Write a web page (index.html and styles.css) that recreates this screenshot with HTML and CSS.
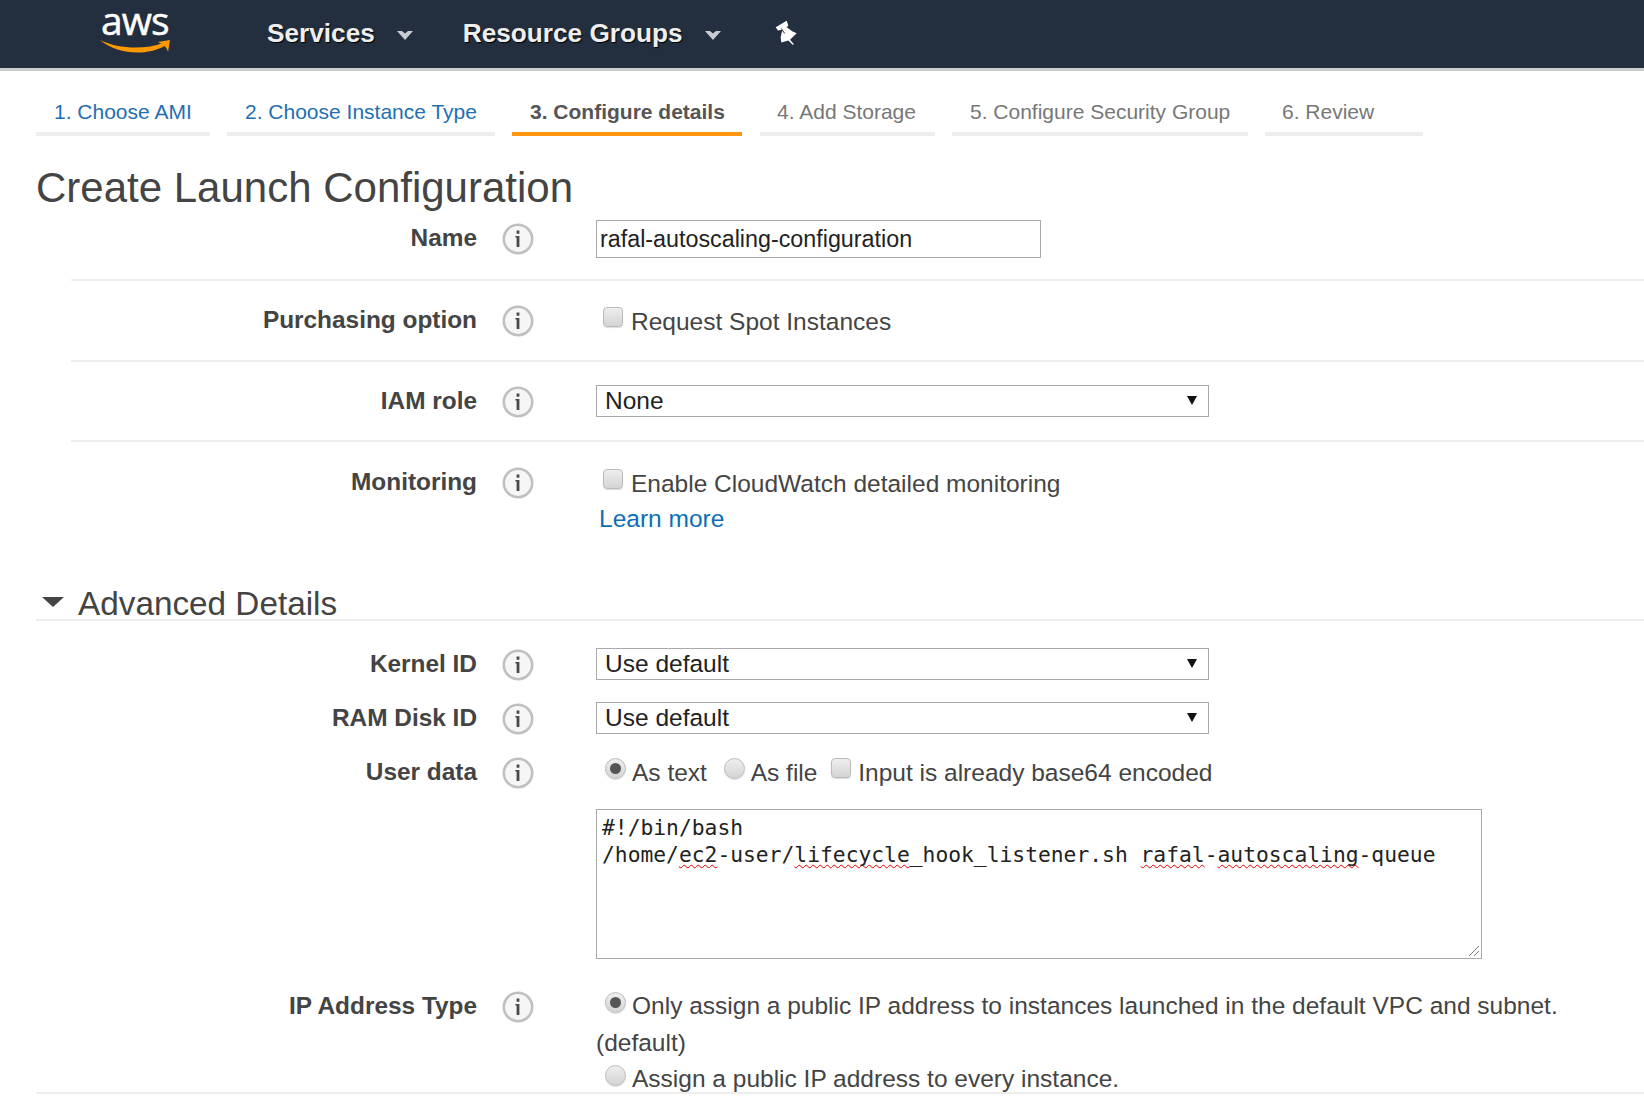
FILE: index.html
```html
<!DOCTYPE html>
<html lang="en">
<head>
    <meta charset="UTF-8">
    <title>Create Launch Configuration</title>
    <link rel="stylesheet" href="styles.css">
</head>
<body>
    <svg class="defs" width="0" height="0">
        <symbol id="info" viewBox="0 0 32 32">
            <circle cx="16" cy="16" r="14.2" fill="#f6f6f6" stroke="#c0c0c0" stroke-width="2.6"/>
            <path d="M13.4 13 H17.4 V24 H14.6 V14.6 H13.4 Z" fill="#4a4a4a"/>
            <rect x="14.6" y="7.5" width="2.8" height="3.2" fill="#4a4a4a"/>
        </symbol>
        <symbol id="caret" viewBox="0 0 16 9">
            <path d="M0 0 H5 L8 2.6 L11 0 H16 L8 9 Z" fill="#c9ccd0"/>
        </symbol>
    </svg>
    <header class="nav">
        <div class="logo">
            <span class="logo-text">aws</span>
            <svg class="logo-smile" viewBox="0 0 72 16" width="72" height="16">
                <path d="M0 1 C18 10 45 11 63 4 L65 7 C46 17 18 16 0 1 Z" fill="#f90"/>
                <path d="M58 3 L70 1 L68 13 C67 9 65 6 58 3 Z" fill="#f90"/>
            </svg>
        </div>
        <a class="nav-item">Services<svg class="nav-caret"><use href="#caret"/></svg></a>
        <a class="nav-item">Resource Groups<svg class="nav-caret"><use href="#caret"/></svg></a>
        <svg class="pin" viewBox="40 28 75 80" width="25" height="27">
            <path d="M45 52 L78 33 L83 47 L78 52 L96 65 L108 70 L88 90 L100 103 L96 105 L83 92 L62 98 L60 82 L65 60 L52 62 Z" fill="#fff"/>
            <path d="M62 56 L72 71" stroke="#232f3e" stroke-width="3" fill="none"/>
        </svg>
    </header>
    <ul class="tabs">
        <li class="tab tab-done w1">1. Choose AMI</li>
        <li class="tab tab-done w2">2. Choose Instance Type</li>
        <li class="tab tab-active w3">3. Configure details</li>
        <li class="tab w4">4. Add Storage</li>
        <li class="tab w5">5. Configure Security Group</li>
        <li class="tab w6">6. Review</li>
    </ul>
    <h1 class="title">Create Launch Configuration</h1>
    <main class="form">
        <div class="row row-name line">
            <label class="row-label">Name</label>
            <svg class="info"><use href="#info"/></svg>
            <div class="row-body"><input class="text-input" type="text" value="rafal-autoscaling-configuration"></div>
        </div>
        <div class="row row-purchase line">
            <label class="row-label">Purchasing option</label>
            <svg class="info"><use href="#info"/></svg>
            <div class="row-body body-check"><span class="check"></span><span class="opt opt-check">Request Spot Instances</span></div>
        </div>
        <div class="row row-iam line">
            <label class="row-label">IAM role</label>
            <svg class="info"><use href="#info"/></svg>
            <div class="row-body"><div class="select"><span>None</span></div></div>
        </div>
        <div class="row row-monitor">
            <label class="row-label">Monitoring</label>
            <svg class="info"><use href="#info"/></svg>
            <div class="row-body body-check">
                <span class="check"></span><span class="opt opt-check">Enable CloudWatch detailed monitoring</span>
                <a class="learn">Learn more</a>
            </div>
        </div>
        <h2 class="section"><span class="section-arrow"></span>Advanced Details</h2>
        <div class="row row-kernel">
            <label class="row-label">Kernel ID</label>
            <svg class="info"><use href="#info"/></svg>
            <div class="row-body"><div class="select"><span>Use default</span></div></div>
        </div>
        <div class="row row-ram">
            <label class="row-label">RAM Disk ID</label>
            <svg class="info"><use href="#info"/></svg>
            <div class="row-body"><div class="select"><span>Use default</span></div></div>
        </div>
        <div class="row row-user">
            <label class="row-label">User data</label>
            <svg class="info"><use href="#info"/></svg>
            <div class="row-body">
                <div class="user-opts">
                    <span class="radio radio-on first"></span><span class="opt">As text</span>
                    <span class="radio"></span><span class="opt">As file</span>
                    <span class="check"></span><span class="opt opt-b64">Input is already base64 encoded</span>
                </div>
                <div class="textarea">#!/bin/bash
/home/<span class="typo">ec2</span>-user/<span class="typo">lifecycle</span>_hook_listener.sh <span class="typo">rafal</span>-<span class="typo">autoscaling</span>-queue<svg class="grip" viewBox="0 0 12 12" width="12" height="12"><path d="M1 11 L11 1 M6 11 L11 6" stroke="#777" stroke-width="1" fill="none"/></svg></div>
            </div>
        </div>
        <div class="row row-ip">
            <label class="row-label">IP Address Type</label>
            <svg class="info"><use href="#info"/></svg>
            <div class="row-body ip-body">
                <div class="ip-line"><span class="radio radio-on first"></span><span class="opt">Only assign a public IP address to instances launched in the default VPC and subnet.</span></div>
                <div class="ip-line ip-default">(default)</div>
                <div class="ip-line"><span class="radio first"></span><span class="opt">Assign a public IP address to every instance.</span></div>
            </div>
        </div>
        <div class="form-end"></div>
    </main>
</body>
</html>
```

FILE: styles.css
```css
html, body {
    margin: 0;
    padding: 0;
    height: 1108px;
    overflow: hidden;
    background: #fff;
}
body {
    font-family: "Liberation Sans", Arial, sans-serif;
    color: #444;
}
.defs {
    position: absolute;
}

/* top bar */
.nav {
    height: 68px;
    background: #232f3e;
    border-bottom: 3px solid #ccc;
    display: flex;
    align-items: center;
}
.logo {
    width: 72px;
    margin-left: 100px;
    margin-right: 95px;
    height: 68px;
    position: relative;
}
.logo-text {
    position: absolute;
    left: 1px;
    top: 1px;
    font-family: "Open Sans", sans-serif;
    font-size: 39px;
    letter-spacing: -1px;
    -webkit-text-stroke: 0.5px #fff;
    line-height: 38px;
    color: #fff;
}
.logo-smile {
    position: absolute;
    left: 0;
    top: 39px;
}
.nav-item {
    font-size: 26.2px;
    font-weight: bold;
    color: #eee;
    text-shadow: 1px 1px 1px #000;
    display: flex;
    align-items: center;
    margin-right: 50px;
    margin-top: -2px;
}
.nav-caret {
    width: 16px;
    height: 9px;
    margin-left: 22px;
    margin-top: 5px;
}
.pin {
    margin-left: 3px;
    margin-top: -4px;
}

/* wizard tabs */
.tabs {
    list-style: none;
    margin: 0;
    padding: 25px 0 0 36px;
    display: flex;
    gap: 17px;
    font-size: 21px;
}
.tab {
    height: 40px;
    line-height: 32px;
    padding-left: 18px;
    box-sizing: border-box;
    border-bottom: 4px solid #eee;
    color: #777;
}
.tab-done {
    color: #1f6fb2;
}
.tab-active {
    color: #555;
    font-weight: bold;
    border-bottom-color: #ff9612;
}
.w1 { width: 174px; }
.w2 { width: 268px; }
.w3 { width: 230px; }
.w4 { width: 175px; margin-left: 1px; padding-left: 17px; }
.w5 { width: 296px; }
.w6 { width: 158px; padding-left: 17px; }

.title {
    margin: 26px 0 0 36px;
    font-size: 42px;
    font-weight: normal;
    line-height: 52px;
    color: #444;
}

/* form rows */
.row {
    display: grid;
    grid-template-columns: 477px 82px 1fr;
    font-size: 24.5px;
}
.row-label {
    font-size: 24.4px;
    font-weight: bold;
    text-align: right;
    line-height: 36px;
    color: #444;
}
.info {
    width: 32px;
    height: 32px;
    margin: 3px 0 0 25px;
}
.row-body {
    margin-left: 37px;
    line-height: 36px;
}
.body-check {
    padding-top: 2px;
}
.line {
    position: relative;
}
.line::after {
    content: "";
    position: absolute;
    left: 71px;
    right: 0;
    bottom: 0;
    height: 2px;
    background: #eee;
}
.row-name { height: 61px; margin-top: 6px; }
.row-purchase { height: 81px; padding-top: 21px; box-sizing: border-box; }
.row-iam { height: 80px; padding-top: 21px; box-sizing: border-box; }
.row-monitor { height: 142px; padding-top: 22px; box-sizing: border-box; }
.row-kernel { height: 54px; padding-top: 25px; }
.row-ram { height: 54px; }
.row-user { height: 234px; }
.row-ip { height: 104px; }

.text-input {
    width: 445px;
    height: 38px;
    box-sizing: border-box;
    border: 1px solid #aaa;
    padding: 0 3px;
    font-family: inherit;
    font-size: 23.3px;
    color: #222;
    display: block;
}
.select {
    width: 613px;
    height: 32px;
    box-sizing: border-box;
    border: 1px solid #aaa;
    padding-left: 8px;
    line-height: 30px;
    color: #222;
    position: relative;
    margin-top: 2px;
}
.select::after {
    content: "";
    position: absolute;
    right: 11px;
    top: 10px;
    border-left: 5px solid transparent;
    border-right: 5px solid transparent;
    border-top: 9px solid #111;
}
.check, .radio {
    display: inline-block;
    width: 20px;
    height: 20px;
    box-sizing: border-box;
    border: 1px solid #bbb;
    background: linear-gradient(#eee, #d4d4d4);
    box-shadow: 0 1px 1px #ddd;
    position: relative;
    top: -5px;
    vertical-align: middle;
}
.check {
    border-radius: 4px;
    margin-left: 7px;
    top: -7px;
}
.radio {
    width: 21px;
    height: 21px;
    border-radius: 50%;
    margin-left: 10px;
}
.radio.first {
    margin-left: 9px;
}
.radio-on::after {
    content: "";
    position: absolute;
    left: 4px;
    top: 4px;
    width: 11px;
    height: 11px;
    border-radius: 50%;
    background: #555;
}
.opt {
    margin-left: 6px;
}
.opt-check {
    margin-left: 8px;
}
.opt-b64 {
    margin-left: 7px;
}
.learn {
    display: block;
    margin: -1px 0 0 3px;
    color: #0b6fb8;
}

.section {
    margin: 0 0 0 36px;
    height: 37px;
    box-sizing: border-box;
    border-bottom: 2px solid #eee;
    font-size: 33.3px;
    font-weight: normal;
    line-height: 40px;
    padding-left: 42px;
    color: #444;
    position: relative;
}
.section-arrow {
    position: absolute;
    left: 6px;
    top: 13px;
    border-left: 11px solid transparent;
    border-right: 11px solid transparent;
    border-top: 10px solid #444;
}

.user-opts {
    height: 54px;
    padding-top: 1px;
}
.user-opts .radio {
    top: -6px;
}
.textarea {
    width: 886px;
    height: 150px;
    box-sizing: border-box;
    border: 1px solid #aaa;
    padding: 4px 5px;
    font-family: "DejaVu Sans Mono", monospace;
    font-size: 21.3px;
    line-height: 27px;
    color: #222;
    white-space: pre;
    position: relative;
}
.typo {
    text-decoration: underline wavy #e00;
    text-decoration-thickness: 1.2px;
    text-decoration-skip-ink: none;
    text-underline-offset: 2px;
}
.grip {
    position: absolute;
    right: 1px;
    bottom: 1px;
}
.ip-line {
    height: 36.5px;
    white-space: nowrap;
}
.form-end {
    margin-left: 36px;
    height: 2px;
    background: #eee;
}
```
